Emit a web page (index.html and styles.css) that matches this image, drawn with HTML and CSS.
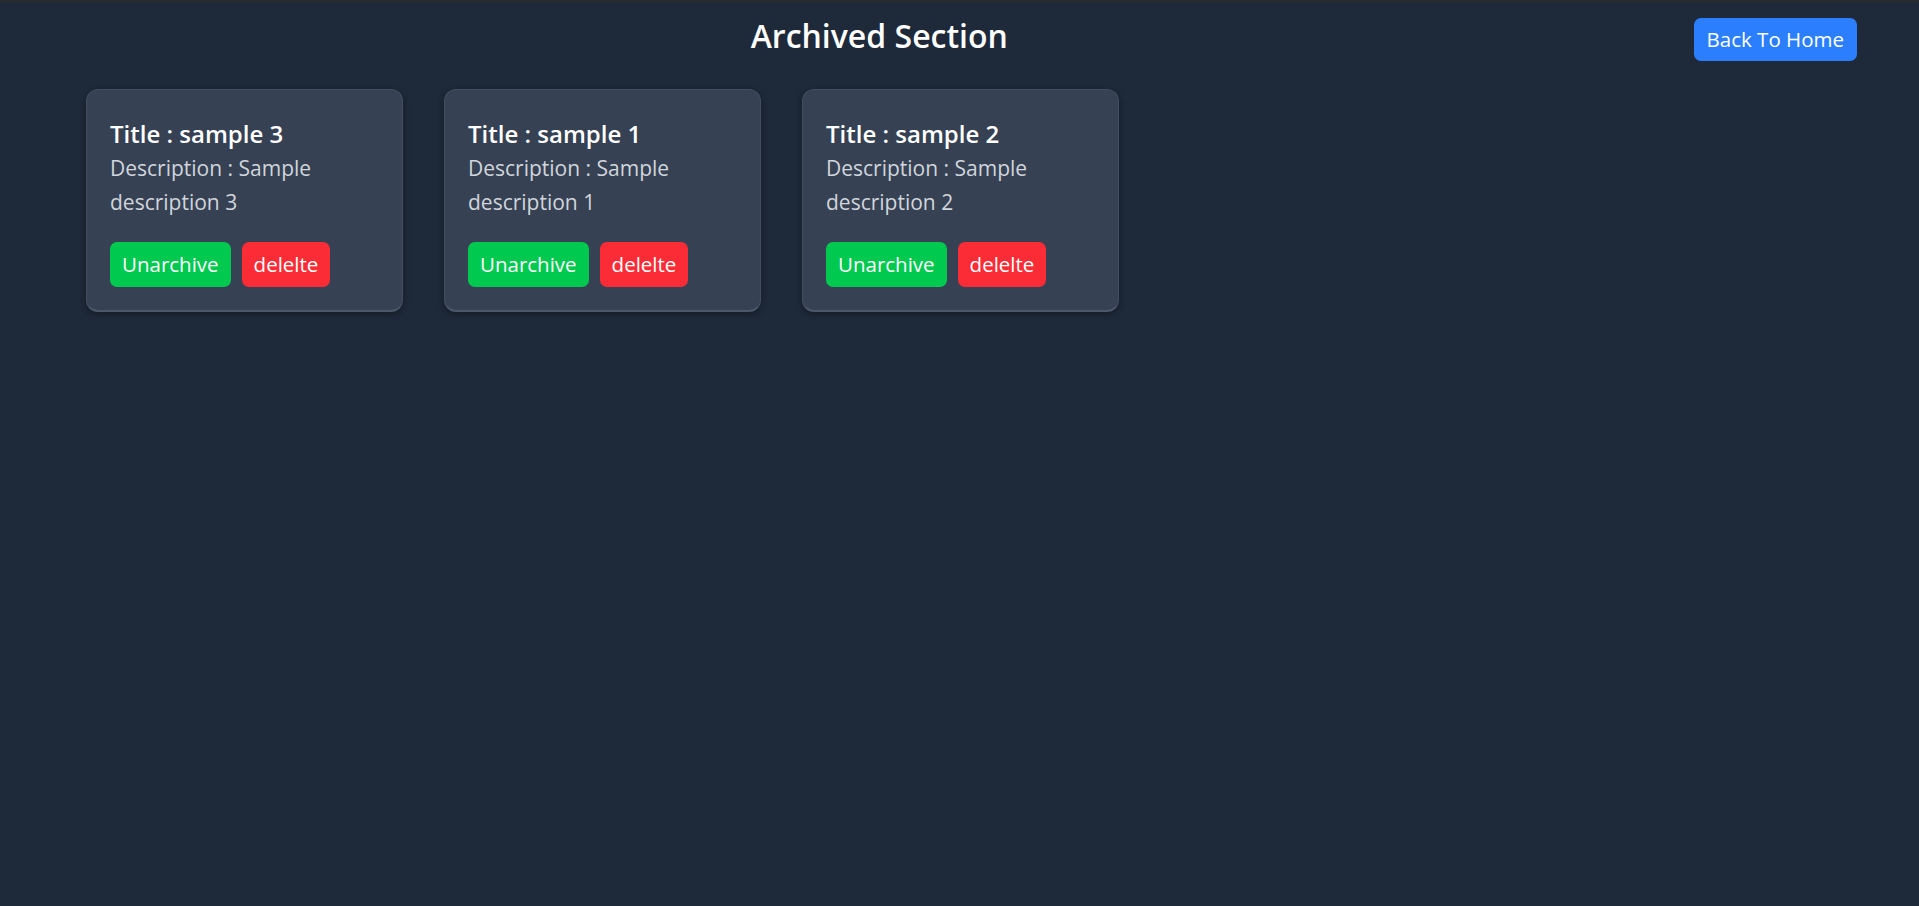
FILE: index.html
```html
<!DOCTYPE html>
<html lang="en">
<head>
<meta charset="utf-8">
<title>Archived Section</title>
<link rel="stylesheet" href="styles.css">
</head>
<body>
<div class="page">
  <header class="header">
    <h1 class="heading">Archived Section</h1>
    <button class="btn btn-blue">Back To Home</button>
  </header>
  <main class="cards">
    <div class="card">
      <h2 class="card-title">Title : sample 3</h2>
      <p class="card-desc">Description : Sample description 3</p>
      <div class="actions">
        <button class="btn btn-green">Unarchive</button>
        <button class="btn btn-red">delelte</button>
      </div>
    </div>
    <div class="card">
      <h2 class="card-title">Title : sample 1</h2>
      <p class="card-desc">Description : Sample description 1</p>
      <div class="actions">
        <button class="btn btn-green">Unarchive</button>
        <button class="btn btn-red">delelte</button>
      </div>
    </div>
    <div class="card">
      <h2 class="card-title">Title : sample 2</h2>
      <p class="card-desc">Description : Sample description 2</p>
      <div class="actions">
        <button class="btn btn-green">Unarchive</button>
        <button class="btn btn-red">delelte</button>
      </div>
    </div>
  </main>
</div>
</body>
</html>
```

FILE: styles.css
```css
* { box-sizing: border-box; }
html, body { margin: 0; padding: 0; height: 100%; }
body {
  background: #1e2939;
  font-family: "Open Sans", "Noto Sans", sans-serif;
  color: #fff;
}
.page {
  min-height: 100%;
  border-top: 2px solid #2a2b2f;
}
.header {
  display: flex;
  align-items: flex-start;
  padding: 13px 62px 0 0;
}
.heading {
  flex: 1;
  margin: 0;
  padding-left: 65px;
  text-align: center;
  font-size: 32px;
  font-weight: 600;
  line-height: 42px;
}
.btn {
  border: none;
  border-radius: 7px;
  color: #fff;
  font-family: inherit;
  font-size: 20.5px;
  line-height: 45px;
  height: 45px;
  padding: 0 12px;
  cursor: pointer;
}
.btn-blue {
  background: #2b7fff;
  height: 43px;
  line-height: 43px;
  padding: 0 13px;
  margin-top: 3px;
}
.btn-green { background: #00c950; }
.btn-red { background: #fb2c36; }
.cards {
  display: flex;
  gap: 41px;
  padding: 28px 0 0 86px;
}
.card {
  width: 317px;
  background: #364153;
  border: 1px solid #434e60;
  border-bottom: 2px solid #4d586a;
  border-radius: 12px;
  box-shadow: 0 2px 6px rgba(0, 0, 0, 0.35);
  padding: 26px 22px 23px 23px;
}
.card-title {
  margin: 0;
  font-size: 24px;
  font-weight: 600;
  line-height: 35px;
}
.card-desc {
  margin: 0;
  color: #d1d5dc;
  font-size: 21px;
  line-height: 34px;
}
.actions {
  display: flex;
  gap: 11px;
  margin-top: 23px;
}
```
